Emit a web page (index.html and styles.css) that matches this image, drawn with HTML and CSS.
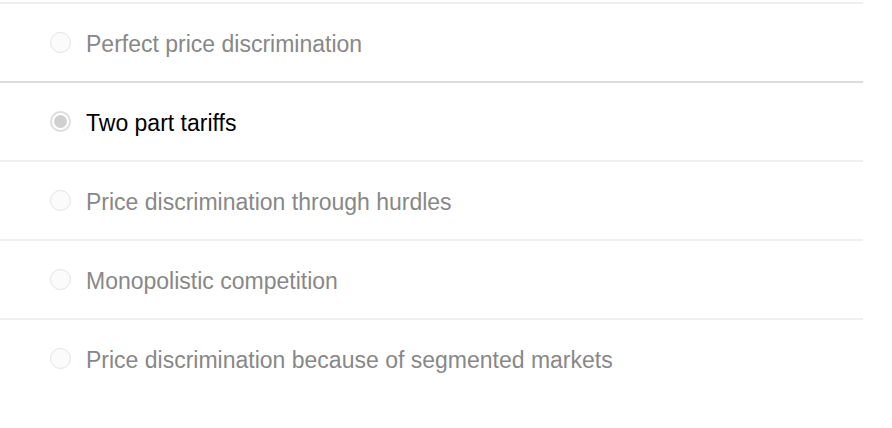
FILE: index.html
```html
<!DOCTYPE html>
<html>
<head>
<meta charset="utf-8">
<link rel="stylesheet" href="styles.css">
</head>
<body>
<ul class="options">
  <li class="option"><span class="radio"></span><span class="label">Perfect price discrimination</span></li>
  <li class="option option--after-hover option--selected"><span class="radio radio--checked"></span><span class="label">Two part tariffs</span></li>
  <li class="option"><span class="radio"></span><span class="label">Price discrimination through hurdles</span></li>
  <li class="option"><span class="radio"></span><span class="label">Monopolistic competition</span></li>
  <li class="option"><span class="radio"></span><span class="label">Price discrimination because of segmented markets</span></li>
</ul>
</body>
</html>
```
FILE: styles.css
```css
html, body {
  margin: 0;
  padding: 0;
  background: #fff;
}
.options {
  list-style: none;
  margin: 2px 0 0 0;
  padding: 0;
  width: 863px;
  font-family: "Liberation Sans", Arial, sans-serif;
}
.option {
  display: flex;
  align-items: center;
  gap: 15px;
  height: 77px;
  padding-left: 50px;
  border-top: 2px solid #efefef;
}
.option--after-hover {
  border-top-color: #dcdcdc;
}
.radio {
  box-sizing: border-box;
  width: 21px;
  height: 21px;
  border-radius: 50%;
  border: 1px solid #e3e3e3;
  background: #fbfbfb;
  display: flex;
  align-items: center;
  justify-content: center;
}
.radio--checked {
  border: 2px solid #dedede;
  background: #fff;
}
.radio--checked::after {
  content: "";
  width: 13px;
  height: 13px;
  border-radius: 50%;
  background: #d0d0d0;
}
.label {
  font-size: 23px;
  color: #888;
  margin-top: 3px;
}
.option--selected .label {
  color: #000;
}
```
